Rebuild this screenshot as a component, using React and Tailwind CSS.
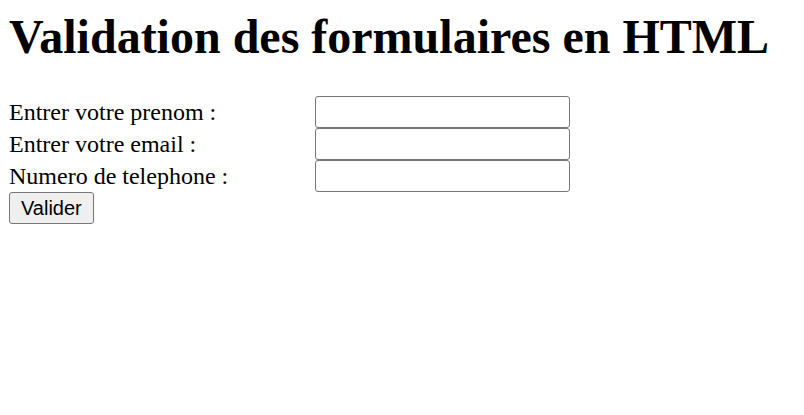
import React from 'react';

export default function App() {
  const fields = [
    { label: 'Entrer votre prenom :', type: 'text' },
    { label: 'Entrer votre email :', type: 'email' },
    { label: 'Numero de telephone :', type: 'tel' },
  ];

  return (
    <div className="min-h-screen bg-white text-black px-[9px] pt-[9px] font-['Liberation_Serif',serif]">
      <h1 className="m-0 mb-[32px] text-[48px] font-bold leading-[normal]">
        Validation des formulaires en HTML
      </h1>

      <form onSubmit={(e) => e.preventDefault()}>
        <div className="grid grid-cols-[306px_255px]">
          {fields.map((f) => (
            <React.Fragment key={f.label}>
              <label className="flex h-[32px] items-center text-[24px] leading-[normal]">
                {f.label}
              </label>
              <input
                type={f.type}
                className="h-[32px] w-[255px] rounded-[3px] border border-[#767676] bg-white px-[3px] text-[20px] outline-none"
              />
            </React.Fragment>
          ))}
        </div>
        <button
          type="submit"
          className="h-[32px] rounded-[3px] border border-[#767676] bg-[#efefef] px-[11px] text-[20px] leading-none text-black font-['Liberation_Sans',Arial,sans-serif]"
        >
          Valider
        </button>
      </form>
    </div>
  );
}
